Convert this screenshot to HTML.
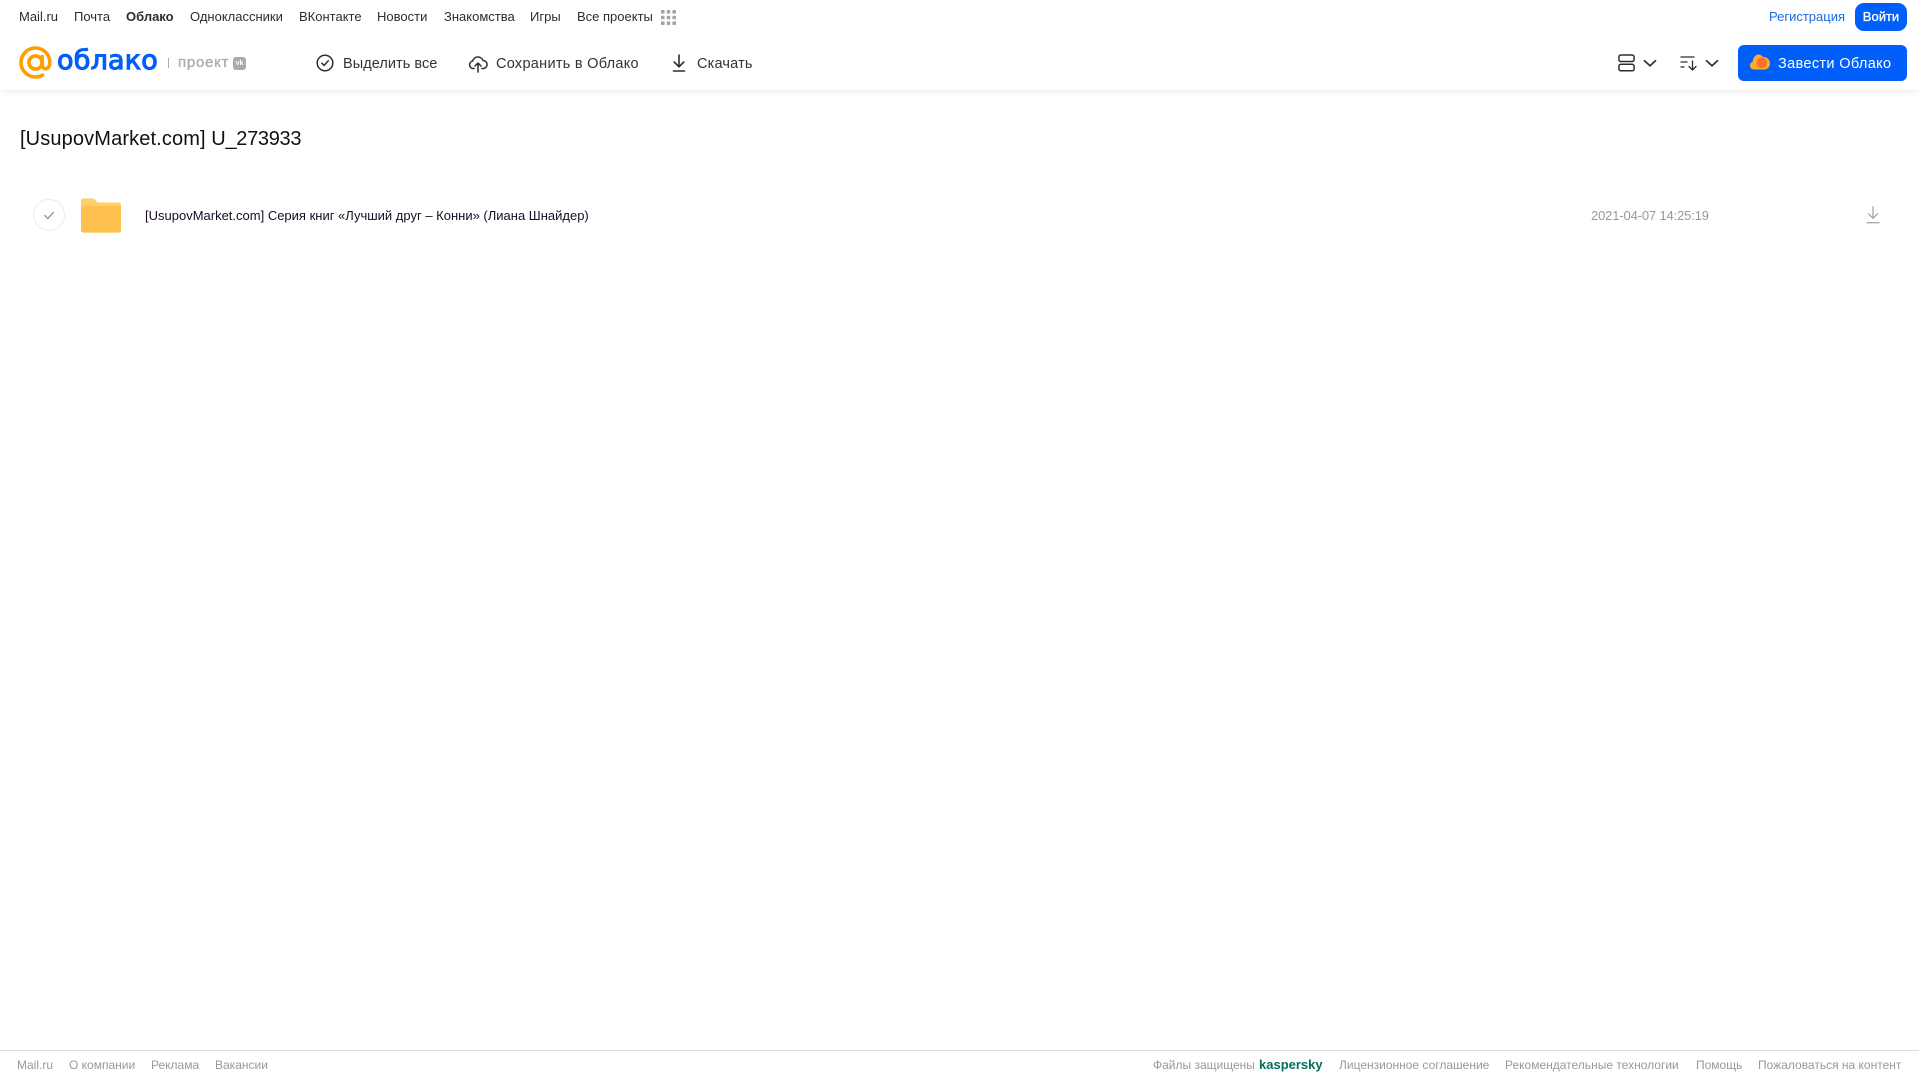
<!DOCTYPE html>
<html lang="ru">
<head>
<meta charset="utf-8">
<title>Облако</title>
<style>
html,body{margin:0;padding:0;background:#fff;width:1919px;height:1079px;overflow:hidden}
body{position:relative;font-family:"Liberation Sans",Arial,sans-serif;color:#2c2d2e}
.t{position:absolute;white-space:nowrap;line-height:20px}
.n{top:7px;font-size:13px;color:#2c2d2e}
.a{top:53.500px;font-size:14.500px;color:#333}
.f{top:1055px;font-size:12px;color:#999}
svg{position:absolute;display:block}
#hdr{position:absolute;left:0;top:0;width:1919px;height:90px;background:#fff;box-shadow:0 2px 8px rgba(0,0,0,.07)}
</style>
</head>
<body>
<div id="hdr"></div>
<span class="t n" style="left:19px">Mail.ru</span>
<span class="t n" style="left:74px">Почта</span>
<span class="t n" style="left:126px;font-weight:bold">Облако</span>
<span class="t n" style="left:190px">Одноклассники</span>
<span class="t n" style="left:299px">ВКонтакте</span>
<span class="t n" style="left:377px">Новости</span>
<span class="t n" style="left:444px">Знакомства</span>
<span class="t n" style="left:530px">Игры</span>
<span class="t n" style="left:577px">Все проекты</span>
<svg style="left:661px;top:10px" width="15" height="15" viewBox="0 0 15 15" fill="#a3a3a3"><rect x="0" y="0" width="3.600" height="3.600" rx=".8"/><rect x="5.700" y="0" width="3.600" height="3.600" rx=".8"/><rect x="11.400" y="0" width="3.600" height="3.600" rx=".8"/><rect x="0" y="5.700" width="3.600" height="3.600" rx=".8"/><rect x="5.700" y="5.700" width="3.600" height="3.600" rx=".8"/><rect x="11.400" y="5.700" width="3.600" height="3.600" rx=".8"/><rect x="0" y="11.400" width="3.600" height="3.600" rx=".8"/><rect x="5.700" y="11.400" width="3.600" height="3.600" rx=".8"/><rect x="11.400" y="11.400" width="3.600" height="3.600" rx=".8"/></svg>

<span class="t" style="left:1769px;top:7px;font-size:13px;color:#1a6be0">Регистрация</span>
<div style="position:absolute;left:1855px;top:3px;width:52px;height:28px;background:#005ff9;border-radius:9px;color:#fff;font-size:13px;line-height:28px;text-align:center;-webkit-text-stroke:.3px #fff">Войти</div>

<svg style="left:19px;top:46px" width="33" height="34" viewBox="0 0 33 34" fill="none" stroke="#ff9e00" stroke-width="3.600" stroke-linecap="round"><circle cx="16.500" cy="16.500" r="6.600"/><path d="M23.100 10.500v8.200c0 2.500 1.600 4 3.400 4 2.200 0 4.300-2.200 4.300-6.200C30.800 8.500 24.500 2 16.500 2 8.500 2 2 8.500 2 16.500S8.500 31 16.500 31c2.800 0 5-.6 7-1.800"/></svg>
<span class="t" style="left:57px;top:43px;font-family:'DejaVu Sans',sans-serif;font-size:27px;line-height:36px;color:#005ff9;-webkit-text-stroke:1.100px #005ff9;letter-spacing:.2px">облако</span>
<div style="position:absolute;left:168px;top:58px;width:1px;height:10px;background:#aaa"></div>
<span class="t" style="left:178px;top:52.500px;font-size:15px;color:#aaa;letter-spacing:.75px;-webkit-text-stroke:.3px #aaa">проект</span>
<div style="position:absolute;left:233px;top:57px;width:13px;height:13px;border-radius:3px;background:#aaa;color:#fff;font-size:7px;font-weight:bold;line-height:13px;text-align:center">vk</div>

<svg style="left:316px;top:54px" width="18" height="18" viewBox="0 0 18 18" fill="none" stroke="#2c2d2e" stroke-width="1.500" stroke-linecap="round" stroke-linejoin="round"><circle cx="9" cy="9" r="7.800"/><path d="M5.800 9.200l2.300 2.300 4.200-4.700"/></svg>
<span class="t a" style="left:343px;letter-spacing:.05px">Выделить все</span>
<svg style="left:468px;top:54px" width="20" height="19" viewBox="0 0 20 19" fill="none" stroke="#2c2d2e" stroke-width="1.500" stroke-linecap="round" stroke-linejoin="round"><path d="M6 14.500H5A3.800 3.800 0 0 1 4.600 7 5.500 5.500 0 0 1 15 6.500a4 4 0 0 1 .2 8H14"/><path d="M10 18V9.500M7 12l3-3 3 3"/></svg>
<span class="t a" style="left:496px;letter-spacing:.28px">Сохранить в Облако</span>
<svg style="left:671px;top:54px" width="16" height="18" viewBox="0 0 16 18" fill="none" stroke="#2c2d2e" stroke-width="1.600" stroke-linecap="round" stroke-linejoin="round"><path d="M8 1v11.500M3.200 8l4.800 4.800L12.800 8M2.500 17h11"/></svg>
<span class="t a" style="left:697px;letter-spacing:.18px">Скачать</span>

<svg style="left:1618px;top:54px" width="17" height="18" viewBox="0 0 17 18" fill="none" stroke="#2c2d2e" stroke-width="1.500"><rect x=".9" y="1" width="15.200" height="6.500" rx="2"/><rect x=".9" y="10.300" width="15.200" height="6.500" rx="2"/></svg>
<svg style="left:1643px;top:59px" width="14" height="9" viewBox="0 0 14 9" fill="none" stroke="#2c2d2e" stroke-width="1.700" stroke-linecap="round" stroke-linejoin="round"><path d="M1.500 1.800L7 6.800l5.500-5"/></svg>
<svg style="left:1680px;top:55px" width="18" height="16" viewBox="0 0 18 16" fill="none" stroke="#2c2d2e" stroke-width="1.300" stroke-linecap="round" stroke-linejoin="round"><path d="M1 2h13M1 7h6M1 12h3M12.500 6v9M9 11.500l3.500 3.500 3.500-3.500"/></svg>
<svg style="left:1705px;top:59px" width="14" height="9" viewBox="0 0 14 9" fill="none" stroke="#2c2d2e" stroke-width="1.700" stroke-linecap="round" stroke-linejoin="round"><path d="M1.500 1.800L7 6.800l5.500-5"/></svg>

<div style="position:absolute;left:1738px;top:45px;width:169px;height:36px;background:#005ff9;border-radius:6px"></div>
<svg style="left:1750px;top:54px" width="20" height="16" viewBox="0 0 20 16"><path d="M4 15.500C1.600 15.500 0 13.800 0 11.500 0 9.600 1.200 8.400 2.600 7.800 3 3.400 5.600.5 8.500.5c2 0 3.500 1 4.500 2.600h1C17.300 3.100 20 6 20 9.500c0 3.400-2.500 6-6 6z" fill="#ffa930"/><circle cx="11.800" cy="8.800" r="5.200" fill="#f9702a"/></svg>
<span class="t" style="left:1778px;top:53.500px;font-size:14.500px;color:#fff;letter-spacing:.35px">Завести Облако</span>

<span class="t" style="left:20px;top:125px;font-size:20px;line-height:28px;color:#111"><span style="letter-spacing:.13px">[UsupovMarket.com]</span> <span style="letter-spacing:-.3px">U_273933</span></span>

<svg style="left:32px;top:198px" width="34" height="34" viewBox="0 0 34 34" fill="none"><circle cx="17" cy="17" r="15.500" stroke="#ececec" stroke-width="1"/><path d="M12.800 17.500l3 3 5.500-6" stroke="#999" stroke-width="1.400" stroke-linecap="round" stroke-linejoin="round"/></svg>
<svg style="left:81px;top:198px" width="40" height="35" viewBox="0 0 41 35"><path d="M0 2.500A2.500 2.500 0 0 1 2.500 0h9c1.500 0 2.300.5 3.200 1.600l1.200 1.600c.6.700 1.200 1 2.100 1H38.500A2.500 2.500 0 0 1 41 6.700V32.500A2.500 2.500 0 0 1 38.500 35H2.500A2.500 2.500 0 0 1 0 32.500z" fill="#ffcf6b"/><path d="M0 9.500A2 2 0 0 1 2 7.500h37a2 2 0 0 1 2 2v23A2.500 2.500 0 0 1 38.500 35H2.500A2.500 2.500 0 0 1 0 32.500z" fill="#ffc14d"/></svg>
<span class="t" style="left:145px;top:206px;font-size:13px;color:#1a0b24">[UsupovMarket.com] Серия книг «Лучший друг – Конни» (Лиана Шнайдер)</span>
<span class="t" style="left:1591px;top:206px;font-size:13px;color:#999;letter-spacing:-.15px">2021-04-07 14:25:19</span>
<svg style="left:1866px;top:206px" width="14" height="18" viewBox="0 0 14 18" fill="none" stroke="#aaa" stroke-width="1.400" stroke-linecap="round" stroke-linejoin="round"><path d="M7 1v11M2.500 7.800L7 12.300l4.500-4.500M1 16.700h12"/></svg>

<div style="position:absolute;left:0;top:1050px;width:1919px;height:1px;background:#dcdcdc"></div>
<span class="t f" style="left:17px">Mail.ru</span>
<span class="t f" style="left:69px">О компании</span>
<span class="t f" style="left:151px">Реклама</span>
<span class="t f" style="left:215px">Вакансии</span>
<span class="t f" style="left:1153px">Файлы защищены</span>
<span class="t f" style="left:1259px;font-weight:bold;font-size:13px;color:#00705f">kaspersky</span>
<span class="t f" style="left:1339px">Лицензионное соглашение</span>
<span class="t f" style="left:1505px">Рекомендательные технологии</span>
<span class="t f" style="left:1696px">Помощь</span>
<span class="t f" style="left:1758px">Пожаловаться на контент</span>
</body>
</html>
